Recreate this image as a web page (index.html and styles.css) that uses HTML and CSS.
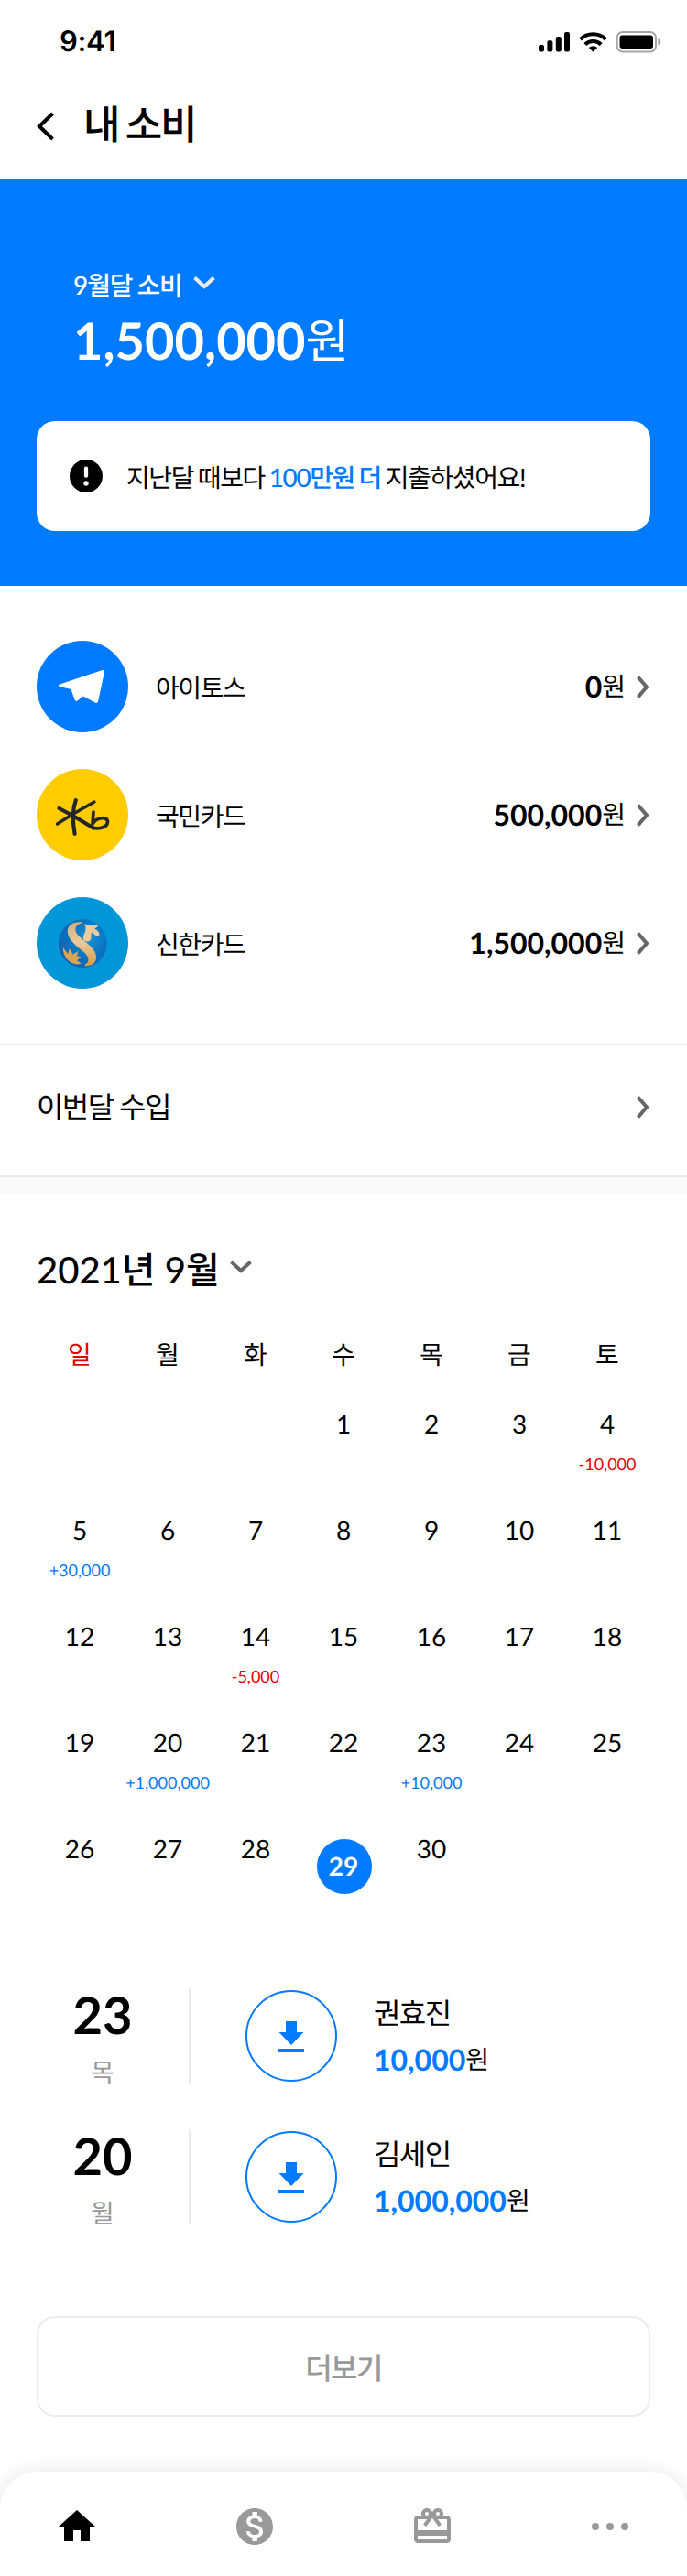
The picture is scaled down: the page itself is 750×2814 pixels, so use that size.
FILE: index.html
```html
<!DOCTYPE html>
<html lang="ko">
<head>
<meta charset="utf-8">
<title>내 소비</title>
<link rel="stylesheet" href="styles.css">
</head>
<body>
<svg class="defs" width="0" height="0">
  <symbol id="down" viewBox="0 0 24 14"><path d="M1.500 1.500 12 11l10.500-9.500" fill="none" stroke="currentColor" stroke-width="4"/></symbol>
  <symbol id="right" viewBox="0 0 14 25"><path d="M1.500 1.500 11 12.500 1.500 23.500" fill="none" stroke="#666" stroke-width="4"/></symbol>
  <symbol id="download" viewBox="0 0 28 34"><path d="M8 0h12v12h7.500L14 26 .5 12H8zM0 30h28v4H0z" fill="#007aff"/></symbol>
</svg>
<div class="screen">
  <div class="status">
    <span class="time">9:41</span>
    <svg class="status-icons" width="136" height="28" viewBox="0 0 136 28">
      <rect x="0" y="16" width="6" height="7.500" rx="2"/><rect x="9.400" y="11.300" width="6" height="12.200" rx="2"/><rect x="18.800" y="7" width="6" height="16.500" rx="2"/><rect x="28" y="2" width="6" height="21.500" rx="2"/>
      <g fill="none" stroke="#000" stroke-width="4"><path d="M45.500 10a20 20 0 0 1 28 0"/><path d="M50.800 15.500a12.500 12.500 0 0 1 17.400 0"/></g>
      <path d="M54.800 19a7 7 0 0 1 9.400 0l-4.700 4.700z"/>
      <rect x="85.700" y="2" width="42.300" height="21.500" rx="6" fill="none" stroke="#a6a6a6" stroke-width="2"/><rect x="88.500" y="5.500" width="36.500" height="14.500" rx="3"/><path d="M130.300 9c4 1.500 4 6 0 7.500z" fill="#a6a6a6"/>
    </svg>
  </div>
  <header class="header">
    <svg width="20" height="32" viewBox="0 0 20 32"><path d="M17.500 2 3 16l14.500 14" fill="none" stroke="#000" stroke-width="4"/></svg>
    <h1 class="title">내 소비</h1>
  </header>
  <section class="hero">
    <div class="hero-month">9월달 소비 <svg class="hero-arrow" width="24" height="14"><use href="#down"/></svg></div>
    <div class="hero-total"><b>1,500,000</b>원</div>
    <div class="notice">
      <svg width="36" height="36" viewBox="0 0 36 36"><circle cx="18" cy="18" r="18"/><path d="M18 9.700v8" stroke="#fff" stroke-width="4.300" stroke-linecap="round"/><circle cx="18" cy="26" r="2.700" fill="#fff"/></svg>
      <p class="notice-text">지난달 때보다 <em>100만원 더</em> 지출하셨어요!</p>
    </div>
  </section>
  <section class="cards">
    <div class="card">
      <svg class="logo" viewBox="0 0 100 100"><circle cx="50" cy="50" r="50" fill="#007aff"/><path d="M24.500 47.800 71.800 32q2.600-.4 2.200 2L67 66.500q-.7 2-2.800 1.200L50.800 60.500l-6.300 5q-2 1-2.800-.8L37.500 53l-12.500-3q-2-1-.5-2.200z" fill="#fff"/></svg>
      <span class="name">아이토스</span><span class="amount"><b>0</b>원</span><svg class="go" width="14" height="25"><use href="#right"/></svg>
    </div>
    <div class="card">
      <svg class="logo" viewBox="0 0 100 100"><circle cx="50" cy="50" r="50" fill="#fc0"/><g fill="none" stroke="#262626" stroke-linecap="round" stroke-linejoin="round"><path d="M42.800 34.200c-3.500 9-3.500 24-1.200 36.600M24.500 43l15 8L62 64.500" stroke-width="4.200"/><path d="M63 36 40 49 22.500 60" stroke-width="3.400"/><path d="M62 47l-1 13c5-8 17-8 16.500-2C77 64 68 66 60.500 64" stroke-width="3.700"/></g></svg>
      <span class="name">국민카드</span><span class="amount"><b>500,000</b>원</span><svg class="go" width="14" height="25"><use href="#right"/></svg>
    </div>
    <div class="card">
      <svg class="logo" viewBox="0 0 100 100">
        <defs><radialGradient id="globe" cx=".6" cy=".4" r=".65"><stop offset="0" stop-color="#1f93d3"/><stop offset=".5" stop-color="#0a78c4"/><stop offset="1" stop-color="#1260b0"/></radialGradient><linearGradient id="gold" x2="0" y2="1"><stop offset="0" stop-color="#d5ae75"/><stop offset=".45" stop-color="#edca9b"/><stop offset="1" stop-color="#d39b48"/></linearGradient></defs>
        <circle cx="50" cy="50" r="50" fill="#0096d8"/><circle cx="50.300" cy="50.700" r="26.400" fill="url(#globe)"/>
        <path fill="url(#gold)" d="M49 27.300C38 26.500 33 32 34 39c1 8 9 14 17 20.500C58 65 58 72 52.500 73.500v1.500C60 76 66 71 65 64.500 64 57 57 52 51 47c-7-6-9-9-8.500-12.500C43 31 45 29.500 49 28.700z"/>
        <path fill="#edca9b" d="M51.700 29.300c4.300 1.500 10 .3 15.800 2.200l-4.500 3.500c3 .5 5.500 3 5.500 6.500-3 2-6 0-7.500-3.500-1.500 2-2 3.500-1.500 6 .5 4-4.500 6-7.500 3.500-2-2-1-5.500.5-8.500 1-3 2-6-.8-9.700z"/>
        <path fill="#d7a355" d="M28.800 54.800 34 62l2-6 3.500 6.500 6-3.500-1.500 5.500 4.500.7-4.500 4 5 3.500C39.500 76 28.500 68 28.800 54.800z"/>
      </svg>
      <span class="name">신한카드</span><span class="amount"><b>1,500,000</b>원</span><svg class="go" width="14" height="25"><use href="#right"/></svg>
    </div>
  </section>
  <div class="income"><span>이번달 수입</span><svg width="14" height="25"><use href="#right"/></svg></div>
  <section class="calendar">
    <h2 class="cal-title">2021년 9월 <svg class="cal-arrow" width="24" height="14"><use href="#down"/></svg></h2>
    <div class="grid week"><span class="sun">일</span><span>월</span><span>화</span><span>수</span><span>목</span><span>금</span><span>토</span></div>
    <div class="grid days">
      <div></div><div></div><div></div><div>1</div><div>2</div><div>3</div><div>4<small class="out">-10,000</small></div>
      <div>5<small>+30,000</small></div><div>6</div><div>7</div><div>8</div><div>9</div><div>10</div><div>11</div>
      <div>12</div><div>13</div><div>14<small class="out">-5,000</small></div><div>15</div><div>16</div><div>17</div><div>18</div>
      <div>19</div><div>20<small>+1,000,000</small></div><div>21</div><div>22</div><div>23<small>+10,000</small></div><div>24</div><div>25</div>
      <div>26</div><div>27</div><div>28</div><div><b class="today">29</b></div><div>30</div>
    </div>
  </section>
  <section class="history">
    <div class="entry">
      <div class="date"><b>23</b><span>목</span></div>
      <div class="badge"><svg width="28" height="34"><use href="#download"/></svg></div>
      <div class="detail"><span class="who">권효진</span><span class="sum"><b>10,000</b>원</span></div>
    </div>
    <div class="entry">
      <div class="date"><b>20</b><span>월</span></div>
      <div class="badge"><svg width="28" height="34"><use href="#download"/></svg></div>
      <div class="detail"><span class="who">김세인</span><span class="sum"><b>1,000,000</b>원</span></div>
    </div>
  </section>
  <button class="more">더보기</button>
  <nav class="tabs">
    <svg viewBox="0 0 24 24"><path d="M10 20v-6h4v6h5v-8h3L12 3 2 12h3v8z"/></svg>
    <svg viewBox="0 0 24 24"><path d="M12 2C6.480 2 2 6.480 2 12s4.480 10 10 10 10-4.480 10-10S17.520 2 12 2zm1.410 16.090V20h-2.670v-1.930c-1.710-.36-3.160-1.460-3.270-3.400h1.960c.1 1.050.82 1.870 2.650 1.870 1.960 0 2.400-.98 2.400-1.590 0-.83-.44-1.610-2.670-2.140-2.480-.6-4.180-1.620-4.180-3.670 0-1.720 1.390-2.840 3.110-3.210V4h2.670v1.950c1.860.45 2.790 1.860 2.850 3.390H14.300c-.05-1.110-.64-1.870-2.220-1.870-1.500 0-2.400.68-2.400 1.640 0 .84.65 1.390 2.670 1.910s4.180 1.390 4.180 3.910c-.01 1.830-1.380 2.830-3.120 3.160z"/></svg>
    <svg viewBox="0 0 24 24"><path d="M20 6h-2.180c.11-.31.18-.65.18-1 0-1.660-1.340-3-3-3-1.050 0-1.960.54-2.500 1.350l-.5.67-.5-.68C10.960 2.540 10.050 2 9 2 7.340 2 6 3.340 6 5c0 .35.07.69.18 1H4c-1.110 0-1.990.89-1.990 2L2 19c0 1.110.89 2 2 2h16c1.110 0 2-.89 2-2V8c0-1.110-.89-2-2-2zm-5-2c.55 0 1 .45 1 1s-.45 1-1 1-1-.45-1-1 .45-1 1-1zM9 4c.55 0 1 .45 1 1s-.45 1-1 1-1-.45-1-1 .45-1 1-1zm11 15H4v-2h16v2zm0-5H4V8h5.080L7 10.830 8.620 12 11 8.760l1-1.360 1 1.360L15.380 12 17 10.830 14.920 8H20v6z"/></svg>
    <svg viewBox="0 0 24 24"><circle cx="4" cy="12" r="2"/><circle cx="12" cy="12" r="2"/><circle cx="20" cy="12" r="2"/></svg>
  </nav>
</div>
</body>
</html>
```
FILE: styles.css
```css
* { box-sizing: border-box; }
body { margin: 0; background: #fff; color: #000; font-family: Lato, "Noto Sans CJK KR", sans-serif; font-size: 28px; text-rendering: geometricPrecision; }
svg { display: block; flex: none; }
.defs { position: absolute; }
h1, h2, p { margin: 0; }
.screen { width: 750px; height: 2814px; overflow: hidden; display: flex; flex-direction: column; }
.screen > * { flex: none; }
.status { height: 88px; padding: 26px 26px 0 65px; display: flex; justify-content: space-between; }
.time { font: 600 31px/40px Inter, sans-serif; letter-spacing: -0.3px; }
.status-icons { margin-top: 7px; }
.header { height: 108px; padding: 0 40px 9px; display: flex; align-items: center; gap: 31px; }
.title { margin-bottom: 9px; font-family: "Noto Sans CJK KR", sans-serif; font-size: 44px; font-weight: 500; line-height: 60px; letter-spacing: -2.2px; word-spacing: -2.6px; }
.hero { height: 444px; padding: 93px 40px 0; background: #007aff; color: #fff; }
.hero-month { padding-left: 40px; height: 44px; display: flex; align-items: center; gap: 12px; line-height: 40px; letter-spacing: -1.1px; word-spacing: -1px; font-weight: 500; }
.hero-arrow { margin-bottom: 4px; color: #ebebeb; }
.hero-total { padding-left: 40px; margin-top: -1px; height: 80px; line-height: 80px; font-size: 52px; }
.hero-total b { font-size: 56px; vertical-align: -2px; }
.notice { margin-top: 48px; height: 120px; padding-left: 36px; border-radius: 20px; background: #fff; color: #000; display: flex; align-items: center; gap: 26px; }
.notice-text { padding-top: 2px; letter-spacing: -1.4px; word-spacing: -1px; line-height: 40px; }
.notice-text em { font-style: normal; font-weight: 500; color: #007aff; }
.cards { height: 500px; padding: 60px 41px 0 40px; display: flex; flex-direction: column; gap: 40px; }
.card { height: 100px; display: flex; align-items: center; }
.logo { width: 100px; height: 100px; }
.name { margin-left: 30px; padding-top: 2px; flex: 1; letter-spacing: -1.4px; line-height: 40px; }
.amount { margin-bottom: 1px; line-height: 40px; }
.amount b, .sum b { font-size: 32px; vertical-align: -2px; }
.go { margin-left: 12px; }
.income { height: 146px; padding: 0 41px 8px 40px; display: flex; align-items: center; justify-content: space-between; border-top: 2px solid #ebebeb; border-bottom: 2px solid #ebebeb; font-size: 32px; line-height: 44px; letter-spacing: -1.6px; }
.calendar { height: 860px; border-top: 18px solid #fafafa; }
.cal-title { height: 60px; margin-top: 53px; padding-left: 40px; display: flex; align-items: center; gap: 11px; font-size: 40px; font-weight: 500; line-height: 60px; }
.cal-arrow { margin-bottom: 7px; color: #666; }
.grid { display: grid; grid-template-columns: repeat(7, 96px); padding-left: 39px; text-align: center; }
.week { height: 40px; line-height: 40px; margin-top: 42px; }
.sun { color: #e60000; }
.days { grid-auto-rows: 116px; margin-top: 36px; line-height: 40px; }
.days small { display: block; margin: 11px -20px 0; font-size: 18px; line-height: 26px; color: #007aff; }
.days small.out { color: #e60000; }
.today { display: block; width: 60px; height: 60px; margin: 10px 0 0 19px; padding-right: 2px; border-radius: 50%; background: #007aff; color: #fff; line-height: 58px; }
.history { height: 384px; padding: 26px 40px 0; display: flex; flex-direction: column; gap: 50px; }
.entry { height: 104px; display: flex; align-items: center; }
.date { width: 168px; height: 104px; padding-right: 22px; border-right: 2px solid #ebebeb; text-align: center; }
.date b { display: block; font-size: 56px; line-height: 57px; }
.date span { display: block; margin-top: 14px; line-height: 40px; color: #999; }
.badge { width: 100px; height: 100px; margin-left: 60px; padding-top: 2px; border: 2px solid #007aff; border-radius: 50%; display: grid; place-items: center; }
.detail { margin-left: 40px; display: flex; flex-direction: column; gap: 6px; }
.who { font-size: 32px; line-height: 44px; letter-spacing: -1.6px; }
.sum { line-height: 44px; }
.sum b { color: #007aff; }
.more { margin: 0 40px; height: 110px; padding: 4px 0 0; border: 2px solid #ebebeb; border-radius: 20px; background: #fff; color: #999; font: 500 32px/44px Lato, "Noto Sans CJK KR", sans-serif; letter-spacing: -1.6px; text-rendering: inherit; }
.tabs { margin-top: 60px; height: 114px; padding: 36px 60px 0; border-radius: 40px 40px 0 0; background: #fff; box-shadow: 0 0 20px rgba(0, 0, 0, .1); display: flex; justify-content: space-between; }
.tabs svg { width: 48px; height: 48px; fill: #999; }
.tabs svg:first-child { fill: #000; }
```
